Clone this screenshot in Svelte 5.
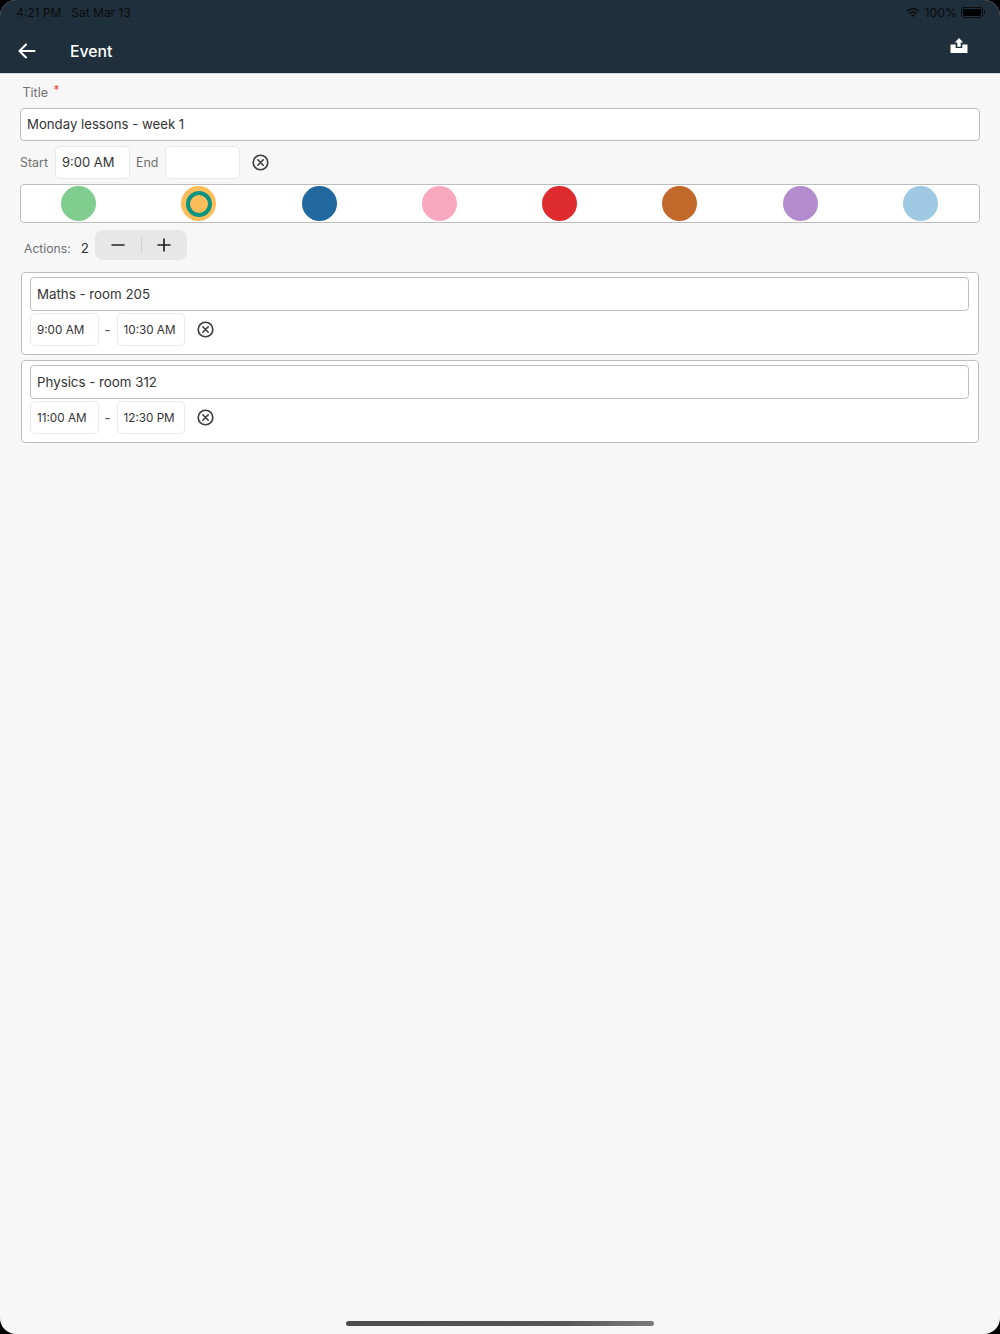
<script>
  const colors = ['#81cd90', '#fdbd59', '#20689e', '#f7a8bf', '#de2c2e', '#c1692b', '#b48ccd', '#9fc9e3'];
  const actions = [
    { title: 'Maths - room 205', start: '9:00 AM', end: '10:30 AM' },
    { title: 'Physics - room 312', start: '11:00 AM', end: '12:30 PM' }
  ];
</script>

{#snippet clear(cls)}
  <svg class={cls} width="17" height="17" viewBox="0 0 17 17" fill="none" stroke="#3d3d3d" stroke-width="1.6" stroke-linecap="round">
    <circle cx="8.5" cy="8.5" r="7.3" />
    <path d="M5.8 5.8l5.4 5.4M11.2 5.8l-5.4 5.4" />
  </svg>
{/snippet}

<div class="frame">
  <header>
    <div class="status">
      <span class="time">4:21 PM</span>
      <span class="date">Sat Mar 13</span>
      <span class="spacer"></span>
      <svg width="14" height="10" viewBox="0 0 14 10" fill="#0b0b0b">
        <path d="M7 1c2.500 0 4.800 1 6.500 2.600l-1.100 1.200A8 8 0 0 0 7 2.600a8 8 0 0 0-5.400 2.200L.5 3.600A9.500 9.500 0 0 1 7 1z" />
        <path d="M7 4.200c1.600 0 3 .6 4.100 1.600L10 7a4.500 4.500 0 0 0-6 0L2.900 5.800A6 6 0 0 1 7 4.200z" />
        <path d="M7 7.200c.8 0 1.400.3 1.900.7L7 10 5.100 7.900c.5-.4 1.100-.7 1.900-.7z" />
      </svg>
      <span class="pct">100%</span>
      <span class="battery"><span class="fill"></span></span>
      <span class="nub"></span>
    </div>
    <div class="bar">
      <svg class="back" width="18" height="16" viewBox="0 0 18 16" fill="none" stroke="#fff" stroke-width="2.100" stroke-linecap="round" stroke-linejoin="round">
        <path d="M16.500 8H1.800M8 1.500L1.500 8 8 14.500" />
      </svg>
      <span class="heading">Event</span>
      <span class="spacer"></span>
      <svg class="upload" width="18" height="16" viewBox="0 0 18 16" fill="#fff">
        <path d="M9 0l4.200 4.600h-2.500v4.200H7.300V4.600H4.800z" />
        <path d="M.5 6.500h5.200v3.600h6.600V6.500h5.200v8.600H.5z" />
      </svg>
    </div>
  </header>

  <main>
    <div class="label">Title <span class="req">*</span></div>
    <div class="input title">Monday lessons - week 1</div>

    <div class="times">
      <span class="tlabel">Start</span>
      <div class="time-box big">9:00 AM</div>
      <span class="tlabel">End</span>
      <div class="time-box big"></div>
      {@render clear('clear-top')}
    </div>

    <div class="colors">
      {#each colors as c, i}
        <span class="dot" style="background:{c}">
          {#if i === 1}<span class="ring"></span>{/if}
        </span>
      {/each}
    </div>

    <div class="count">
      <span class="alabel">Actions:</span>
      <span class="num">2</span>
      <div class="stepper">
        <svg width="14" height="14" viewBox="0 0 14 14" stroke="#222" stroke-width="1.700"><path d="M.500 7h13" /></svg>
        <span class="sep"></span>
        <svg width="14" height="14" viewBox="0 0 14 14" stroke="#222" stroke-width="1.700"><path d="M.500 7h13M7 .500v13" /></svg>
      </div>
    </div>

    {#each actions as a}
      <section class="card">
        <div class="input inner">{a.title}</div>
        <div class="card-times">
          <div class="time-box small">{a.start}</div>
          <span class="dash">-</span>
          <div class="time-box small">{a.end}</div>
          {@render clear('clear-card')}
        </div>
      </section>
    {/each}
  </main>

  <div class="home"></div>
</div>

<style>
  :global(body) {
    background: #000;
  }
  .frame {
    width: 1000px;
    height: 1334px;
    border-radius: 16px;
    overflow: hidden;
    background: #f7f7f7;
    position: relative;
    font-family: Inter, "Noto Sans", sans-serif;
    color: #333;
  }
  header {
    height: 73px;
    background: #1f2f3b;
    border-bottom: 1px solid #d5d8da;
    box-sizing: content-box;
  }
  .status {
    height: 24px;
    padding: 0 15px 0 16px;
    display: flex;
    align-items: center;
    font-size: 12px;
    color: #0c0c0c;
  }
  .date {
    margin-left: 10px;
  }
  .spacer {
    flex: 1;
  }
  .pct {
    margin-left: 4px;
    font-size: 12.300px;
  }
  .battery {
    box-sizing: border-box;
    width: 22px;
    height: 11px;
    margin-left: 4px;
    padding: 1px;
    border: 1px solid #0c0c0c;
    border-radius: 3px;
    display: flex;
  }
  .fill {
    flex: 1;
    background: #000;
    border-radius: 1.500px;
  }
  .nub {
    width: 1px;
    height: 4px;
    margin-left: 1px;
    background: #0c0c0c;
  }
  .bar {
    height: 49px;
    display: flex;
    align-items: center;
    padding: 0 32px 0 18px;
  }
  .back {
    margin-top: 5px;
  }
  .heading {
    margin-left: 34px;
    margin-top: 5px;
    color: #fff;
    font-size: 15.800px;
    font-weight: 500;
  }
  .upload {
    margin-top: -5px;
  }
  main {
    padding: 9px 20px 0;
  }
  .label {
    height: 25px;
    padding-left: 2.500px;
    font-size: 12.500px;
    line-height: 20px;
    color: #707070;
  }
  .req {
    position: relative;
    top: -3px;
    margin-left: 2px;
    color: #f0483e;
    font-size: 12px;
  }
  .input {
    box-sizing: border-box;
    background: #fff;
    border: 1.500px solid #bdbdbd;
    border-radius: 4px;
    display: flex;
    align-items: center;
  }
  .title {
    height: 33px;
    padding: 0 0 2px 6px;
    font-size: 13.200px;
  }
  .times {
    display: flex;
    align-items: center;
    height: 33px;
    margin-top: 5px;
  }
  .tlabel {
    font-size: 12.400px;
    color: #707070;
    margin-right: 7px;
  }
  .time-box {
    box-sizing: border-box;
    background: #fff;
    border: 1px solid #e9e9e9;
    border-radius: 5px;
    display: flex;
    align-items: center;
    height: 33px;
    padding-left: 6px;
  }
  .big {
    width: 75px;
    font-size: 13px;
    margin-right: 6px;
    padding-bottom: 1px;
  }
  .small {
    width: 68.500px;
    font-size: 11.700px;
  }
  .clear-top {
    margin-left: 6px;
  }
  .colors {
    box-sizing: border-box;
    height: 39px;
    margin-top: 5px;
    padding: 0 41px 0 40px;
    background: #fff;
    border: 1.500px solid #bdbdbd;
    border-radius: 4px;
    display: flex;
    justify-content: space-between;
    align-items: center;
  }
  .dot {
    width: 35px;
    height: 35px;
    border-radius: 50%;
    display: flex;
    align-items: center;
    justify-content: center;
  }
  .ring {
    box-sizing: border-box;
    width: 26px;
    height: 26px;
    border-radius: 50%;
    border: 4.500px solid #0b9482;
  }
  .count {
    display: flex;
    align-items: center;
    height: 30px;
    margin-top: 7px;
    padding-left: 4px;
  }
  .alabel {
    font-size: 12.200px;
    color: #707070;
    margin-top: 6px;
  }
  .num {
    width: 14.500px;
    margin-left: 10px;
    font-size: 13.500px;
    margin-top: 6px;
  }
  .stepper {
    width: 92px;
    height: 30px;
    background: #e7e7e7;
    border-radius: 8px;
    display: flex;
    align-items: center;
    justify-content: center;
  }
  .sep {
    width: 1px;
    height: 16px;
    margin: 0 15.500px;
    background: #d3d3d3;
  }
  .card {
    box-sizing: border-box;
    height: 83px;
    margin: 12px 1px 0;
    padding: 4px 9px 3px 8px;
    background: #fff;
    border: 1.500px solid #bdbdbd;
    border-radius: 4px;
  }
  .card + .card {
    margin-top: 5px;
  }
  .inner {
    height: 34px;
    padding-left: 6px;
    font-size: 13.300px;
  }
  .card-times {
    display: flex;
    align-items: center;
    margin-top: 2px;
  }
  .dash {
    width: 18px;
    text-align: center;
    font-size: 14px;
    color: #555;
  }
  .clear-card {
    margin-left: 12px;
  }
  .home {
    position: absolute;
    left: 346px;
    bottom: 8px;
    width: 308px;
    height: 5px;
    border-radius: 3px;
    background: linear-gradient(90deg, #4d4d4d, #555 70%, #7b7b7b);
  }
</style>
